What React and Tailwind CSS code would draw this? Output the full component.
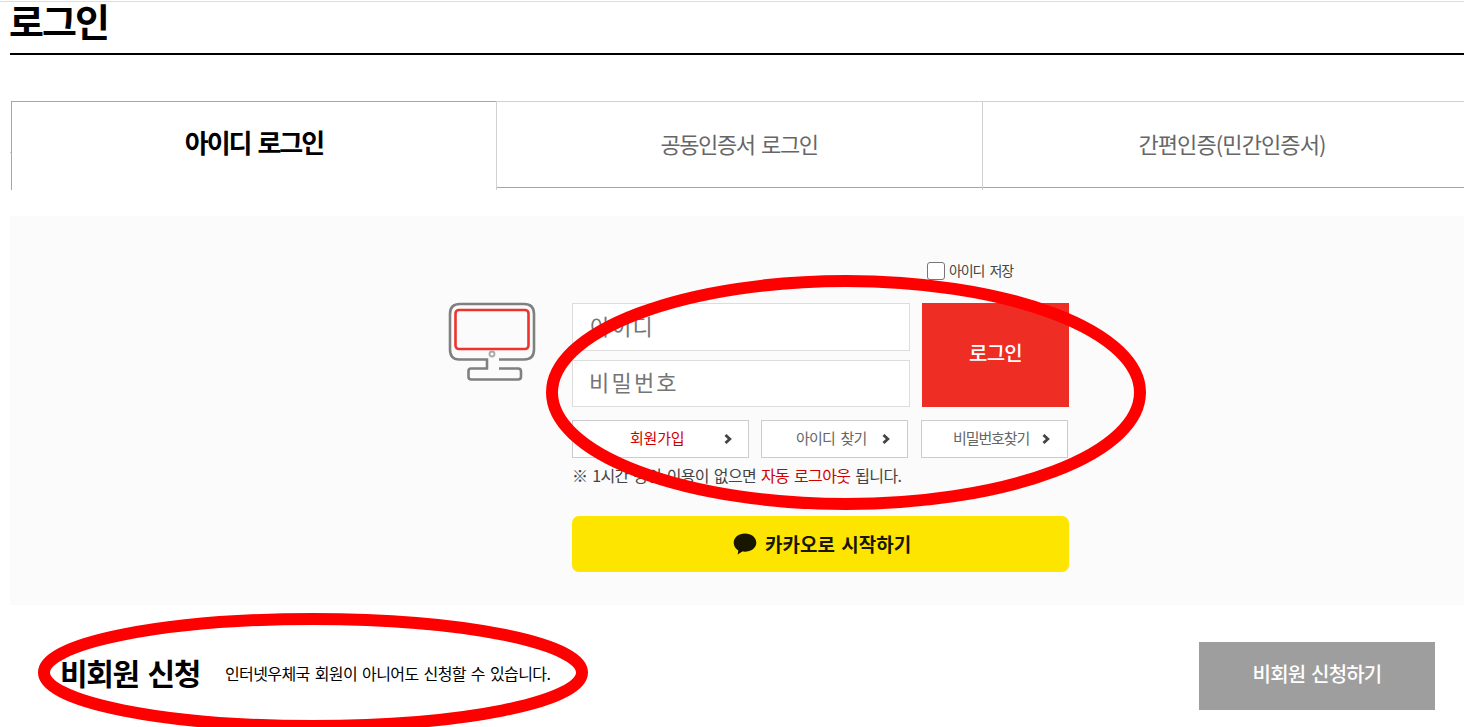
import React, { useState } from 'react';
import clsx from 'clsx';

const tabs = [
  { label: '아이디 로그인', width: 'w-[485px]', text: 'text-[26px] tracking-[-2px] [word-spacing:3px]' },
  { label: '공동인증서 로그인', width: 'w-[486px]', text: 'text-[22px] tracking-[-1.4px] [word-spacing:3px]' },
  { label: '간편인증(민간인증서)', width: 'w-[500px]', text: 'text-[22px] tracking-[-0.9px]' },
];

const links = [
  { label: '회원가입', box: 'w-[177px] pl-[57px]', arrow: 'right-[16px]', text: 'text-[#d00000] tracking-[-0.2px]' },
  { label: '아이디 찾기', box: 'ml-[12px] w-[147px] pl-[34px]', arrow: 'right-[17px]', text: 'text-[#666] tracking-[-0.8px] [word-spacing:3px]' },
  { label: '비밀번호찾기', box: 'ml-[13px] w-[147px] pl-[31px]', arrow: 'right-[17px]', text: 'text-[#666] tracking-[-1.1px]' },
];

const MonitorIcon = () => (
  <svg className="h-[80px] w-[88px]" viewBox="0 0 88 80" fill="none" strokeWidth="2.6">
    <path
      stroke="#808080"
      d="M39 66.500V57.500H11Q2 57.500 2 47.500V12Q2 2 12 2H76Q86 2 86 12V47.500Q86 57.500 76 57.500H51M40.200 66.500H23Q20.500 66.500 20.500 69V75Q20.500 77.500 23.500 77.500H70Q73 77.500 73 74.500V69.500Q73 66.500 70 66.500H51"
    />
    <rect x="7.500" y="8" width="73" height="39" rx="3.500" stroke="#f0322c" />
    <circle cx="44" cy="52" r="2.500" stroke="#a8a8a8" strokeWidth="1.800" />
  </svg>
);

const Arrow = ({ className }) => (
  <svg className={clsx('absolute top-[13px] h-[10px] w-[8px]', className)} viewBox="0 0 8 10" fill="none">
    <path d="M1.500 1L5.800 5L1.500 9" stroke="#444" strokeWidth="2.800" />
  </svg>
);

const LoginTabs = ({ active, onChange }) => (
  <div className="relative ml-px mt-[46px] flex h-[89px] items-start before:absolute before:-left-px before:top-[51px] before:h-px before:w-px before:bg-[#ccc]">
    {tabs.map((tab, i) => (
      <button
        key={tab.label}
        onClick={() => onChange(i)}
        className={clsx(
          'flex shrink-0 justify-center border-t',
          tab.width,
          i === active
            ? 'h-[89px] border-l border-[#a6a6a6] pt-[22px] font-bold text-black'
            : 'h-[87px] border-t-[#d0d0d0] border-b border-b-[#a6a6a6] pt-[23px] text-[#666]',
          i > 0 && 'relative before:absolute before:left-0 before:-top-px before:h-[89px] before:w-px before:bg-[#d0d0d0]'
        )}
      >
        <span className={clsx('leading-[36px]', tab.text)}>{tab.label}</span>
      </button>
    ))}
  </div>
);

const LoginForm = () => {
  const [saveId, setSaveId] = useState(false);

  return (
    <div className="w-[498px]">
      <label className="ml-[355px] flex h-[18px] items-center">
        <input
          type="checkbox"
          checked={saveId}
          onChange={() => setSaveId(!saveId)}
          className="h-[18px] w-[18px] shrink-0 appearance-none rounded-[3px] border border-[#767676] bg-white checked:bg-blue-600"
        />
        <span className="ml-1 whitespace-nowrap pb-[3px] text-[14px] leading-[16px] tracking-[-1.1px] text-[#444] [word-spacing:3px]">아이디 저장</span>
      </label>
      <div className="mt-[23px] flex">
        <div className="flex w-[338px] flex-col gap-[9px]">
          <input
            type="text"
            placeholder="아이디"
            className="h-[48px] border border-[#ddd] bg-white pb-[5px] pl-[17px] text-[22px] tracking-[1px] placeholder:text-[#757575]"
          />
          <input
            type="password"
            placeholder="비밀번호"
            className="h-[47px] border border-[#ddd] bg-white pb-[6px] pl-4 text-[22px] tracking-[2.2px] placeholder:text-[#757575]"
          />
        </div>
        <button className="ml-3 h-[104px] w-[147px] bg-[#ee2e24] pb-1 text-[20px] font-medium tracking-[-0.7px] text-white">
          로그인
        </button>
      </div>
      <div className="mt-[13px] flex">
        {links.map((link) => (
          <a
            key={link.label}
            href="#"
            className={clsx('relative block h-[38px] shrink-0 whitespace-nowrap border border-[#ccc] bg-white text-[15px] leading-[33px]', link.box, link.text)}
          >
            {link.label}
            <Arrow className={link.arrow} />
          </a>
        ))}
      </div>
      <p className="mt-[5px] whitespace-nowrap text-[16px] leading-[24px] tracking-[-0.65px] text-[#444] [word-spacing:2px]">
        ※ 1시간 동안 이용이 없으면 <span className="text-[#d00000]">자동 로그아웃</span> 됩니다.
      </p>
      <button className="mt-[29px] flex h-[56px] w-[497px] items-center rounded-[7px] bg-[#fee500] pl-[161px] text-[#191600]">
        <svg className="h-[22px] w-[24px]" viewBox="0 0 24 22">
          <path fill="#191600" d="M12 0.500C5.700 0.500 0.700 4.400 0.700 9.700C0.700 13 2.600 15.700 5.300 17.400L4.700 21.500L9.300 18.500C17 19.500 23.300 15.500 23.300 9.700C23.300 4.400 18.300 0.500 12 0.500Z" />
        </svg>
        <span className="ml-[8px] text-[19px] font-bold [word-spacing:2px]">카카오로 시작하기</span>
      </button>
    </div>
  );
};

// red pen circles around the form and the guest section
const Marks = () => (
  <svg className="pointer-events-none absolute left-0 top-0 h-[727px] w-[1464px]" viewBox="0 0 1464 727" fill="none" stroke="#f00" strokeWidth="12">
    <ellipse cx="846" cy="392.500" rx="294" ry="111.500" />
    <ellipse cx="313" cy="672.500" rx="269" ry="53.500" />
  </svg>
);

export default function App() {
  const [active, setActive] = useState(0);

  return (
    <div className="relative h-[727px] w-[1464px] overflow-hidden bg-white pt-px font-['Noto_Sans_CJK_KR',sans-serif]">
      <div className="h-px bg-[#ddd]" />
      <div className="pl-[10px]">
        <h1 className="-ml-px h-[53px] text-[38px] font-bold leading-[35px] tracking-[-2px] text-black">로그인</h1>
        <div className="-mt-[2px] h-[2px] bg-black" />
        <LoginTabs active={active} onChange={setActive} />
        <section className="mt-[26px] flex h-[389px] bg-[#fbfbfb] pl-[438px] pt-[46px]">
          <div className="w-[124px] pt-[40px]">
            <MonitorIcon />
          </div>
          <LoginForm />
        </section>
        <section className="flex items-start pl-[50px] pt-[37px]">
          <h2 className="w-[165px] whitespace-nowrap text-[30px] font-bold leading-[60px] tracking-[-1.3px] text-black [word-spacing:3px]">비회원 신청</h2>
          <p className="whitespace-nowrap text-[16px] leading-[63px] tracking-[-0.6px] text-black [word-spacing:2px]">인터넷우체국 회원이 아니어도 신청할 수 있습니다.</p>
          <button className="ml-auto mr-[29px] h-[68px] w-[236px] bg-[#9e9e9e] pb-1 text-[20px] font-medium tracking-[-0.8px] text-white [word-spacing:2px]">
            비회원 신청하기
          </button>
        </section>
      </div>
      <Marks />
    </div>
  );
}
